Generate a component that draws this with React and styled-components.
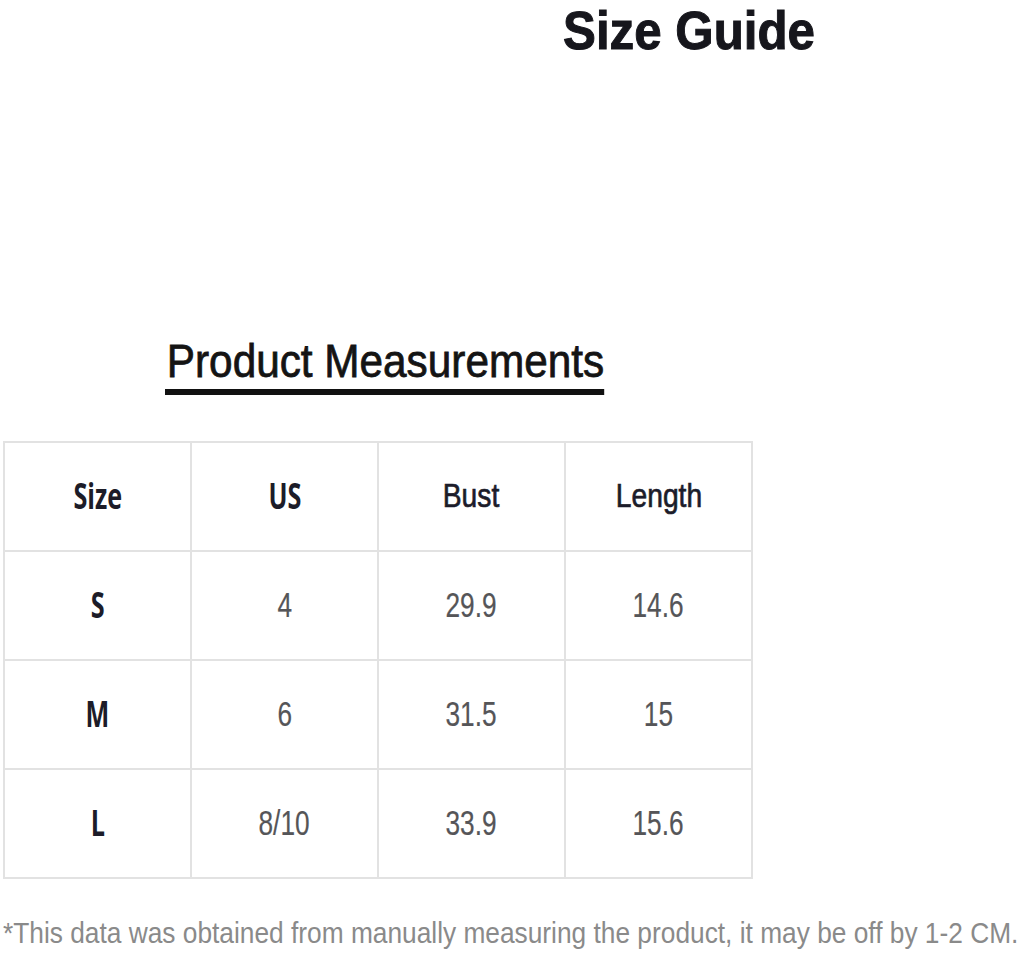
import React from 'react'
import styled, { createGlobalStyle } from 'styled-components'

const GlobalStyle = createGlobalStyle`
  html, body {
    margin: 0;
    padding: 0;
    background: #ffffff;
    overflow: hidden;
  }
  body {
    font-family: "Liberation Sans", Arial, sans-serif;
  }
`

const rows = [
  { size: 'S', us: '4', bust: '29.9', length: '14.6' },
  { size: 'M', us: '6', bust: '31.5', length: '15' },
  { size: 'L', us: '8/10', bust: '33.9', length: '15.6' },
]

const Page = styled.div`
  width: 1022px;
  height: 956px;
  display: flex;
  flex-direction: column;
`

const Title = styled.h1`
  margin: 0 0 0 563px;
  font-family: "Liberation Sans", Arial, sans-serif;
  font-size: 53px;
  line-height: normal;
  font-weight: 700;
  color: #16161c;
  -webkit-text-stroke: 1px #16161c;
  white-space: nowrap;
  span {
    display: inline-block;
    transform: scaleX(0.93);
    transform-origin: left center;
  }
`

const Heading = styled.h2`
  margin: 276px 0 0 165px;
  font-size: 47px;
  line-height: 47px;
  font-weight: 400;
  color: #141414;
  -webkit-text-stroke: 0.8px #141414;
  white-space: nowrap;
  span {
    display: inline-block;
    padding: 0 0 5px 2px;
    border-bottom: 6px solid #111111;
    transform: scaleX(0.9);
    transform-origin: left center;
  }
`

const Table = styled.div`
  margin: 46px 0 0 3px;
  display: grid;
  grid-template-columns: repeat(4, 187px);
  grid-auto-rows: 109px;
  width: max-content;
  border-left: 2px solid #e2e2e2;
  border-top: 2px solid #e2e2e2;
`

const Cell = styled.div`
  display: flex;
  align-items: center;
  justify-content: center;
  border-right: 2px solid #e2e2e2;
  border-bottom: 2px solid #e2e2e2;
  white-space: nowrap;
`

const Label = styled.span`
  display: inline-block;
  font-family: "Open Sans", "Liberation Sans", sans-serif;
  font-weight: 700;
  font-size: 35px;
  color: #1c1c28;
  transform: scaleX(0.72);
  margin-top: -2px;
`

const HeadText = styled.span`
  display: inline-block;
  font-family: "Liberation Sans", Arial, sans-serif;
  font-weight: 400;
  font-size: 34px;
  color: #1c1c2a;
  -webkit-text-stroke: 0.7px #1c1c2a;
  transform: scaleX(0.83);
  margin-top: -2px;
`

const Value = styled.span`
  display: inline-block;
  font-family: "Liberation Sans", Arial, sans-serif;
  font-size: 35px;
  color: #555558;
  -webkit-text-stroke: 0.2px #555558;
  transform: scaleX(0.75);
  margin-top: -2px;
`

const Note = styled.p`
  margin: 39px 0 0 3px;
  font-size: 26.3px;
  line-height: 30px;
  color: #8a8a8a;
  white-space: nowrap;
  span {
    display: inline-block;
    transform: scaleY(1.14);
    transform-origin: left center;
  }
`

const App = () => {
  return (
    <Page>
      <GlobalStyle />
      <Title><span>Size Guide</span></Title>
      <Heading><span>Product Measurements</span></Heading>
      <Table>
        <Cell><Label>Size</Label></Cell>
        <Cell><Label>US</Label></Cell>
        <Cell><HeadText>Bust</HeadText></Cell>
        <Cell><HeadText>Length</HeadText></Cell>
        {rows.map((r) => (
          <React.Fragment key={r.size}>
            <Cell><Label>{r.size}</Label></Cell>
            <Cell><Value>{r.us}</Value></Cell>
            <Cell><Value>{r.bust}</Value></Cell>
            <Cell><Value>{r.length}</Value></Cell>
          </React.Fragment>
        ))}
      </Table>
      <Note>
        <span>*This data was obtained from manually measuring the product, it may be off by 1-2 CM.</span>
      </Note>
    </Page>
  )
}

export default App
